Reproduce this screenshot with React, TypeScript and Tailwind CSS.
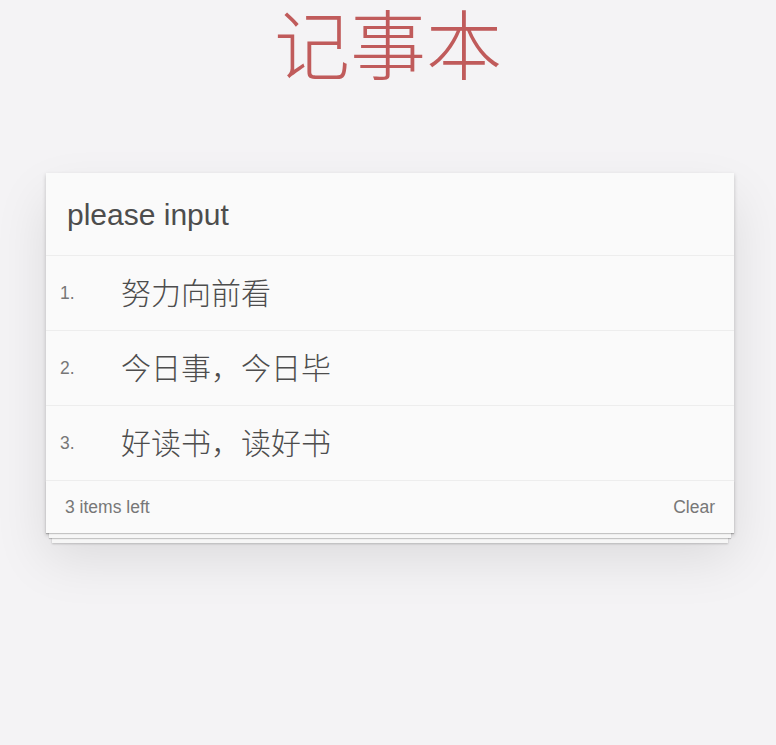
import { useState } from "react";

const todos = ["努力向前看", "今日事，今日毕", "好读书，读好书"];

export default function App() {
  const [items] = useState(todos);

  return (
    <div
      className="min-h-[745px] w-full bg-[#f4f3f5] text-[#4d4d4d]"
      style={{ fontFamily: '"Liberation Sans", "Noto Sans CJK SC", sans-serif' }}
    >
      <h1 className="pt-[10px] text-center text-[76px] font-light leading-none text-[#c05b5b]">
        记事本
      </h1>

      {/* card */}
      <section className="ml-[46px] mt-[87px] w-[688px] bg-[#fafafa] shadow-[0_2px_4px_rgba(0,0,0,0.2),0_25px_50px_rgba(0,0,0,0.1)]">
        <div className="flex h-[83px] items-center border-b border-[#ededed] pl-[21px]">
          <input
            className="w-full bg-transparent text-[30px] text-[#4d4d4d] outline-none placeholder:text-[#4d4d4d]"
            placeholder="please input"
          />
        </div>

        <ol>
          {items.map((t, i) => (
            <li
              key={t}
              className="flex h-[75px] items-center border-b border-[#ededed]"
            >
              <span className="w-[75px] pl-[14px] text-[17.5px] text-[#777]">{i + 1}.</span>
              <span className="text-[30px] font-light text-[#4d4d4d]">{t}</span>
            </li>
          ))}
        </ol>

        <footer className="flex h-[52px] items-center justify-between px-[19px] text-[17.5px] text-[#777] shadow-[0_1px_1px_rgba(0,0,0,0.2),0_8px_0_-3px_#f6f6f6,0_9px_1px_-3px_rgba(0,0,0,0.2),0_16px_0_-6px_#f6f6f6,0_17px_2px_-6px_rgba(0,0,0,0.2)]">
          <span>{items.length} items left</span>
          <button className="cursor-pointer">Clear</button>
        </footer>
      </section>
    </div>
  );
}
